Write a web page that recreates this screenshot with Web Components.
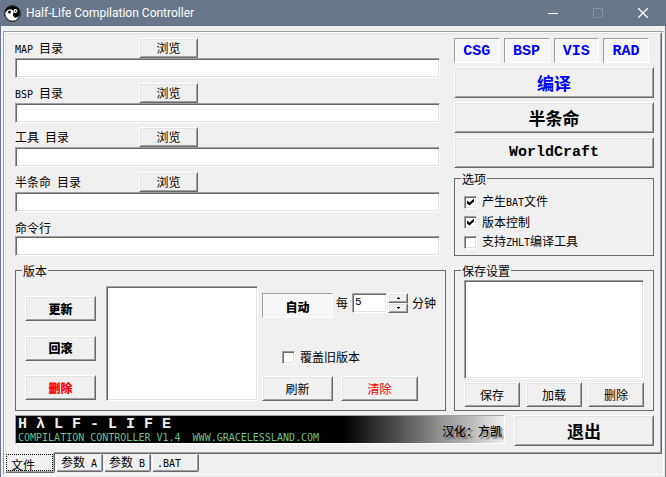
<!DOCTYPE html>
<html lang="zh-CN">
<head>
<meta charset="utf-8">
<title>Half-Life Compilation Controller</title>
<style>
html, body { margin: 0; }
body {
  --face: #f0f0f0; --light: #e3e3e3; --shade: #a0a0a0; --dark: #696969; --frame: #687789;
  --cjk: "Noto Sans CJK SC", sans-serif;
  --mono: "Liberation Mono", "Noto Sans CJK SC", monospace;
  --small: "DejaVu Sans Mono", "Noto Sans CJK SC", monospace;
  font: 12px/14px var(--cjk); color: #000; background: var(--frame);
}
</style>
</head>
<body>
<hl-app></hl-app>
<script>
const base = `
*, *::before, *::after { box-sizing: border-box; }
button, input, select { font: inherit; color: inherit; margin: 0; padding: 0; border: 0; border-radius: 0; outline: 0; }
.lat { font: 10px/14px var(--small); white-space: pre; }
.sunken { border: 1px solid; border-color: var(--shade) #fff #fff var(--shade);
  box-shadow: inset 1px 1px var(--dark), inset -1px -1px var(--light); background: #fff; }
.raised { border: 1px solid; border-color: #fff var(--dark) var(--dark) #fff;
  box-shadow: inset 1px 1px var(--light), inset -1px -1px var(--shade); background: var(--face); }
`;
function define(name, html, setup) {
  const t = document.createElement('template');
  t.innerHTML = html.replace('<style>', '<style>' + base);
  customElements.define(name, class extends HTMLElement {
    constructor() {
      super();
      this.attachShadow({ mode: 'open' }).append(t.content.cloneNode(true));
    }
    connectedCallback() { if (setup) setup(this, this.shadowRoot); }
  });
}

define('hl-button', `<style>
:host { display: block; }
button { display: block; width: 100%; height: 100%; min-height: 20px; text-align: center; white-space: nowrap; }
:host([size=md]) button { min-height: 25px; }
:host([bold]) button { font-weight: 900; }
:host([size=lg]) button { min-height: 31px; font-size: 17px; line-height: 20px; font-weight: 700; }
:host([face=mono]) button { font: bold 15px/18px var(--mono); }
:host([tone=blue]) button { color: #00f; }
:host([tone=red]) button { color: #f00; }
:host([pressed]) button { border: 1px solid; border-color: var(--shade) #fff #fff var(--shade); box-shadow: none; padding-top: 3px;
  background: repeating-conic-gradient(#fff 0 25%, #f0f0f0 0 50%) 0 0 / 2px 2px; }
</style><button type="button" class="raised"><slot></slot></button>`,
(el, r) => { if (el.hasAttribute('pressed')) r.querySelector('button').setAttribute('aria-pressed', 'true'); });

define('hl-path', `<style>
:host { display: block; }
.row { display: grid; grid-template-columns: 124px 59px; height: 20px; align-items: end; }
label { padding-bottom: 1px; }
input { display: block; width: 100%; height: 20px; padding: 0 3px; }
:host([plain]) hl-button { display: none; }
</style><div class="row"><label for="f"><slot></slot></label><hl-button>浏览</hl-button></div>
<input id="f" class="sunken" type="text">`);

define('hl-group', `<style>
:host { display: grid; }
fieldset { min-width: 0; margin: 0; padding: 0 9px; border: 1px solid var(--dark); }
legend { margin-left: -3px; padding: 0 1px; line-height: 13px; }
</style><fieldset><legend><slot name="title"></slot></legend><slot></slot></fieldset>`);

define('hl-check', `<style>
:host { display: block; }
label { display: flex; align-items: center; gap: 5px; height: 20px; white-space: nowrap; }
input { appearance: none; width: 13px; height: 13px; display: block; flex: none; }
input:checked::before { content: ""; display: block; width: 7px; height: 7px; margin: 2px;
  background: #000; clip-path: polygon(0 28%, 36% 57%, 100% 0, 100% 43%, 36% 100%, 0 71%); }
</style><label><input class="sunken" type="checkbox"><span><slot></slot></span></label>`,
(el, r) => { r.querySelector('input').checked = el.hasAttribute('checked'); });

define('hl-list', `<style>
:host { display: grid; }
select { width: 100%; height: 100%; appearance: none; overflow: hidden; }
</style><select class="sunken" size="6"></select>`,
(el, r) => r.querySelector('select').setAttribute('aria-label', el.getAttribute('label')));

define('hl-interval', `<style>
:host { display: flex; align-items: center; gap: 4px; white-space: nowrap; }
.box { display: flex; gap: 1px; height: 20px; }
input { width: 35px; padding: 0 2px 3px; font: 11px/14px var(--mono); }
.spin { display: grid; grid-template-rows: 1fr 1fr; width: 20px; }
.spin button { display: grid; place-items: center; min-height: 0; }
svg { display: block; }
</style><label for="n">每</label><div class="box"><input id="n" class="sunken" type="text" inputmode="numeric" value="5">
<div class="spin"><button type="button" class="raised" aria-label="增加"><svg width="3" height="2"><path d="M1 0h1v1h1v1H0V1h1z"/></svg></button>
<button type="button" class="raised" aria-label="减少"><svg width="3" height="2"><path d="M0 0h3v1H2v1H1V1H0z"/></svg></button></div></div>
<span>分钟</span>`, (el, r) => {
  const n = r.querySelector('input'), [up, down] = r.querySelectorAll('button');
  up.onclick = () => n.value = +n.value + 1;
  down.onclick = () => n.value = Math.max(1, n.value - 1);
});

define('hl-banner', `<style>
:host { display: flex; justify-content: space-between; align-items: center; height: 29px; padding: 0 2px; white-space: pre; overflow: hidden;
  border: 1px solid; border-color: var(--shade) #fff #fff var(--shade);
  background: linear-gradient(90deg, #000 67%, #555 79%, #999 88%, #b8b8b8 93%, #f0f0f0); }
.logo { font: bold 15px/15px var(--mono); color: #eee; }
.sub { font: 10px/11px var(--small); color: #6cc287; }
.by { font-weight: 500; text-shadow: 2px 2px 2px #555, 0 0 1px #fff; padding-top: 3px; }
</style><div><div class="logo">H λ L F - L I F E</div><div class="sub">COMPILATION CONTROLLER V1.4  WWW.GRACELESSLAND.COM</div></div>
<span class="by">汉化：方凯</span>`);

define('hl-tab', `<style>
:host { display: block; }
button { display: block; height: 18px; min-width: 47px; padding: 0 4px; white-space: nowrap; text-align: left;
  background: var(--face); border: 1px solid; border-color: transparent var(--dark) var(--dark) #fff;
  box-shadow: inset -1px -1px var(--shade); border-radius: 0 0 2px 2px; }
:host([selected]) button { position: relative; height: 21px; min-width: 50px; margin-top: -2px; padding: 4px 5px 0; border-top-color: var(--face); }
:host([selected]) button::after { content: ""; position: absolute; inset: 1px 1px 1px 0; border: 1px dotted #000; }
</style><button type="button" role="tab"><slot></slot></button>`,
(el, r) => r.querySelector('button').setAttribute('aria-selected', el.hasAttribute('selected')));

define('hl-titlebar', `<style>
:host { display: flex; align-items: center; height: 26px; padding: 0 3px; background: var(--frame); color: #fff; }
h1 { flex: 1; margin: 0 0 0 5px; font: 12px/16px Roboto, "Noto Sans", sans-serif; white-space: nowrap; }
button { display: grid; place-items: center; width: 45px; height: 26px; background: none; }
nav { display: flex; margin-right: -3px; }
svg { display: block; }
</style>
<svg width="17" height="17" viewBox="0 0 17 17" aria-hidden="true"><circle cx="8.500" cy="8.500" r="7.800" fill="#fff" stroke="#000"/>
<path d="M1 8C1 4 4.500 1 8.500 1S16 4 16 8c0 2-1 4-2.500 4.500C11 13 9.500 12 9 10.500S10 8 9.500 6.500 7 4 5 4.500 2 6.500 1 8z"/>
<circle cx="11.500" cy="6" r="2" fill="#fff"/><circle cx="11.700" cy="6.300" r=".8"/>
<circle cx="5.500" cy="7" r="1.500"/></svg>
<h1>Half-Life Compilation Controller</h1>
<nav aria-label="窗口"><button type="button" aria-label="最小化"><svg width="10" height="10"><path d="M0 5.500h10" stroke="#fff"/></svg></button>
<button type="button" aria-label="最大化" disabled><svg width="10" height="10"><path d="M.5 .5h9v9h-9z" fill="none" stroke="#8592a1"/></svg></button>
<button type="button" aria-label="关闭"><svg width="10" height="10"><path d="M0 0l10 10M10 0L0 10" stroke="#fff" stroke-width="1.300"/></svg></button></nav>`);

define('hl-app', `<style>
:host { display: flex; flex-direction: column; min-height: 100vh; padding: 0 1px 1px; background: var(--frame); }
* { min-width: 0; }
.client { flex: 1; display: grid; padding: 5px 1px 2px 2px; background: var(--face); }
.well { border: 1px solid; border-color: var(--shade) #fff #fff var(--shade); padding-right: 1px; }
.panel { display: grid; grid-template-columns: minmax(0, 1fr) 200px; gap: 8px; padding: 5px 7px 7px 10px; }
.paths { display: flex; flex-direction: column; justify-content: space-between; padding-right: 6px; }
.side { display: grid; gap: 4px; }
.stages { display: grid; grid-template-columns: repeat(4, 1fr); gap: 4px; margin-right: 5px; }
.opts { padding: 7px 0 3px; }
.version { display: grid; grid-template-columns: 71px minmax(80px, 1fr) 152px; grid-template-rows: 115px; column-gap: 10px; padding: 9px 16px 9px 0; }
.acts { display: flex; flex-direction: column; justify-content: space-between; padding: 10px 0 1px; }
.auto { display: grid; align-content: space-between; padding-top: 7px; margin-left: -6px; margin-right: -12px; }
.when { display: grid; grid-template-columns: 71px 1fr; gap: 3px; align-items: start; }
.over { padding: 20px 0 0 20px; }
.pair { display: grid; grid-template-columns: 71px 77px; gap: 8px; }
.saved { display: grid; grid-template-rows: 99px 25px; gap: 3px; padding: 3px 0; }
.trio { display: grid; grid-template-columns: repeat(3, 1fr); gap: 6px; }
.foot { grid-column: 1 / -1; display: grid; grid-template-columns: minmax(0, 1fr) 140px; gap: 9px; margin-top: -4px; }
.tabs { display: flex; gap: 1px; padding-left: 1px; }
</style>
<hl-titlebar></hl-titlebar>
<div class="client"><div class="well">
<main class="panel raised">
  <section class="paths">
    <hl-path><span class="lat">MAP </span>目录</hl-path>
    <hl-path><span class="lat">BSP </span>目录</hl-path>
    <hl-path>工具<span class="lat"> </span>目录</hl-path>
    <hl-path>半条命<span class="lat"> </span>目录</hl-path>
    <hl-path plain>命令行</hl-path>
  </section>
  <section class="side">
    <div class="stages">
      <hl-button pressed face="mono" tone="blue" size="md">CSG</hl-button><hl-button pressed face="mono" tone="blue" size="md">BSP</hl-button>
      <hl-button pressed face="mono" tone="blue" size="md">VIS</hl-button><hl-button pressed face="mono" tone="blue" size="md">RAD</hl-button>
    </div>
    <hl-button size="lg" tone="blue">编译</hl-button>
    <hl-button size="lg">半条命</hl-button>
    <hl-button size="lg" face="mono">WorldCraft</hl-button>
    <hl-group><span slot="title">选项</span><div class="opts">
      <hl-check checked>产生<span class="lat">BAT</span>文件</hl-check>
      <hl-check checked>版本控制</hl-check>
      <hl-check>支持<span class="lat">ZHLT</span>编译工具</hl-check></div></hl-group>
  </section>
  <hl-group><span slot="title">版本</span><div class="version">
    <div class="acts"><hl-button size="md" bold>更新</hl-button><hl-button size="md" bold>回滚</hl-button><hl-button size="md" bold tone="red">删除</hl-button></div>
    <hl-list label="版本"></hl-list>
    <div class="auto">
      <div class="when"><hl-button size="md" bold pressed>自动</hl-button><hl-interval></hl-interval></div>
      <hl-check class="over">覆盖旧版本</hl-check>
      <div class="pair"><hl-button size="md">刷新</hl-button><hl-button size="md" tone="red">清除</hl-button></div>
    </div></div></hl-group>
  <hl-group><span slot="title">保存设置</span><div class="saved">
    <hl-list label="保存设置"></hl-list>
    <div class="trio"><hl-button size="md">保存</hl-button><hl-button size="md">加载</hl-button><hl-button size="md">删除</hl-button></div></div></hl-group>
  <footer class="foot"><hl-banner></hl-banner><hl-button size="lg">退出</hl-button></footer>
</main>
<div class="tabs" role="tablist"><hl-tab selected>文件</hl-tab><hl-tab>参数<span class="lat"> A</span></hl-tab><hl-tab>参数<span class="lat"> B</span></hl-tab><hl-tab><span class="lat">.BAT</span></hl-tab></div>
</div></div>`);
</script>
</body>
</html>
